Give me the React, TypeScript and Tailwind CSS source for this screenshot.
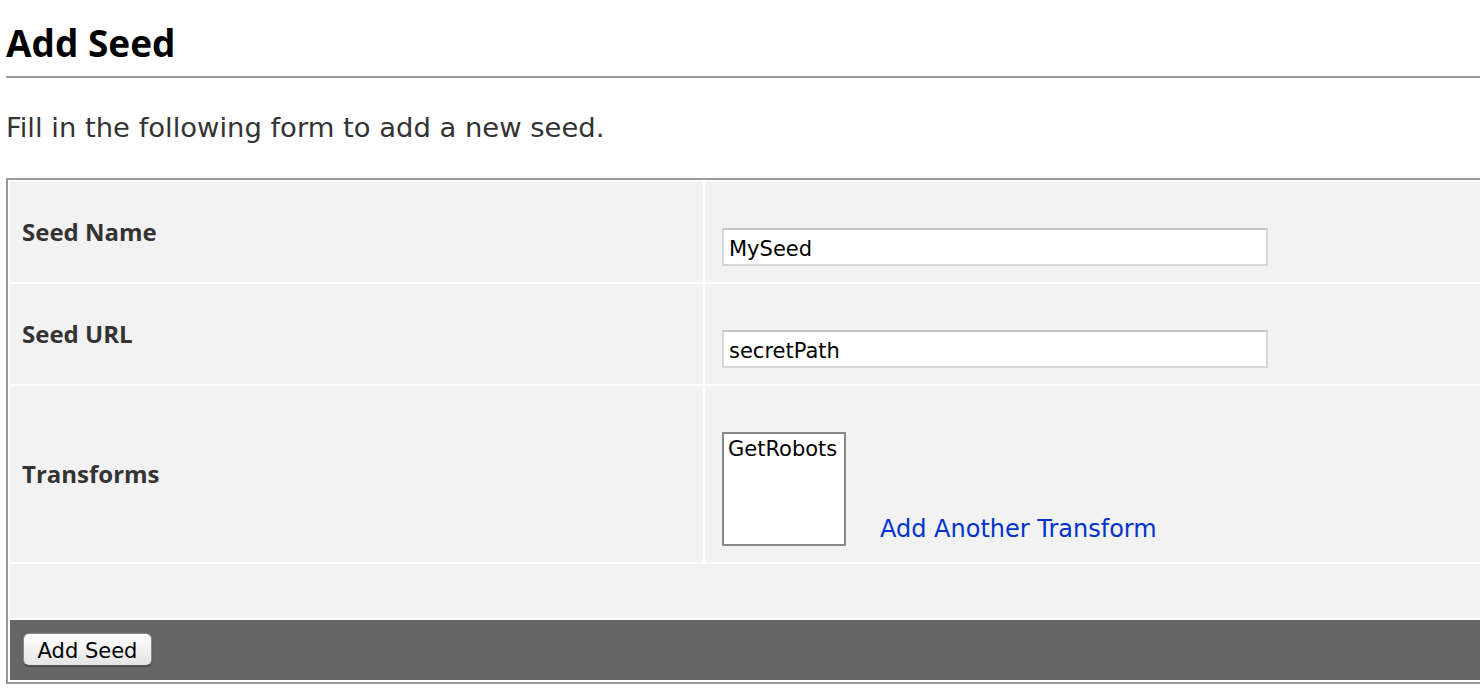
import React from 'react';

const bold = "font-['Open_Sans',sans-serif] font-bold";
const regular = "font-['DejaVu_Sans',sans-serif]";

const FieldRow: React.FC<{ label: string; children: React.ReactNode }> = ({ label, children }) => (
  <tr>
    <td className="w-[693px] bg-[#f2f2f2] px-[12px] align-middle">
      <span className={`${bold} text-[24px] leading-[30px] text-[#333]`}>{label}</span>
    </td>
    <td className="bg-[#f2f2f2] pt-[46px] pb-[16px] pl-[17px] align-top">{children}</td>
  </tr>
);

const TextInput: React.FC<{ value: string }> = ({ value }) => (
  <input
    readOnly
    value={value}
    className={`${regular} block w-[546px] h-[38px] border-2 border-[#d6d6d6] border-t-[#c4c4c4] bg-white pl-[5px] pt-[3px] text-[21px] text-black outline-none`}
  />
);

export default function App() {
  return (
    <div className="w-[1480px] min-h-[700px] overflow-hidden bg-white">
      <div className="pl-[6px]">
        <h1 className={`${bold} pt-[21px] pb-[11px] text-[37px] leading-[44px] text-black border-b-2 border-[#999]`}>
          Add Seed
        </h1>
        <p className={`${regular} mt-[34px] text-[27.4px] leading-[32px] text-[#333]`}>
          Fill in the following form to add a new seed.
        </p>

        <table className="mt-[34px] w-[1700px] table-fixed border-separate border-spacing-[2px] border-2 border-[#999]">
          <tbody>
            <FieldRow label="Seed Name">
              <TextInput value="MySeed" />
            </FieldRow>
            <FieldRow label="Seed URL">
              <TextInput value="secretPath" />
            </FieldRow>
            <FieldRow label="Transforms">
              <div className="flex items-end">
                <div className={`${regular} w-[124px] h-[114px] border-2 border-[#888] bg-white pl-[4px] pt-[3px] text-[21px] leading-[24px] text-black`}>
                  GetRobots
                </div>
                <a href="#" className={`${regular} ml-[34px] mb-[3px] text-[24px] leading-[28px] text-[#0033cc]`}>
                  Add Another Transform
                </a>
              </div>
            </FieldRow>
            <tr>
              <td colSpan={2} className="h-[54px] bg-[#f2f2f2]" />
            </tr>
            <tr>
              <td colSpan={2} className="h-[60px] bg-[#666] pl-[13px] pt-[13px] align-top">
                <button
                  type="button"
                  className={`${regular} w-[129px] h-[33px] rounded-[6px] border border-[#8a8a8a] border-b-[#555] bg-linear-to-b from-white to-[#e4e4e4] pt-[3px] text-[21px] leading-[28px] text-black shadow-[0_1px_1px_rgba(0,0,0,0.35)]`}
                >
                  Add Seed
                </button>
              </td>
            </tr>
          </tbody>
        </table>
      </div>
    </div>
  );
}
